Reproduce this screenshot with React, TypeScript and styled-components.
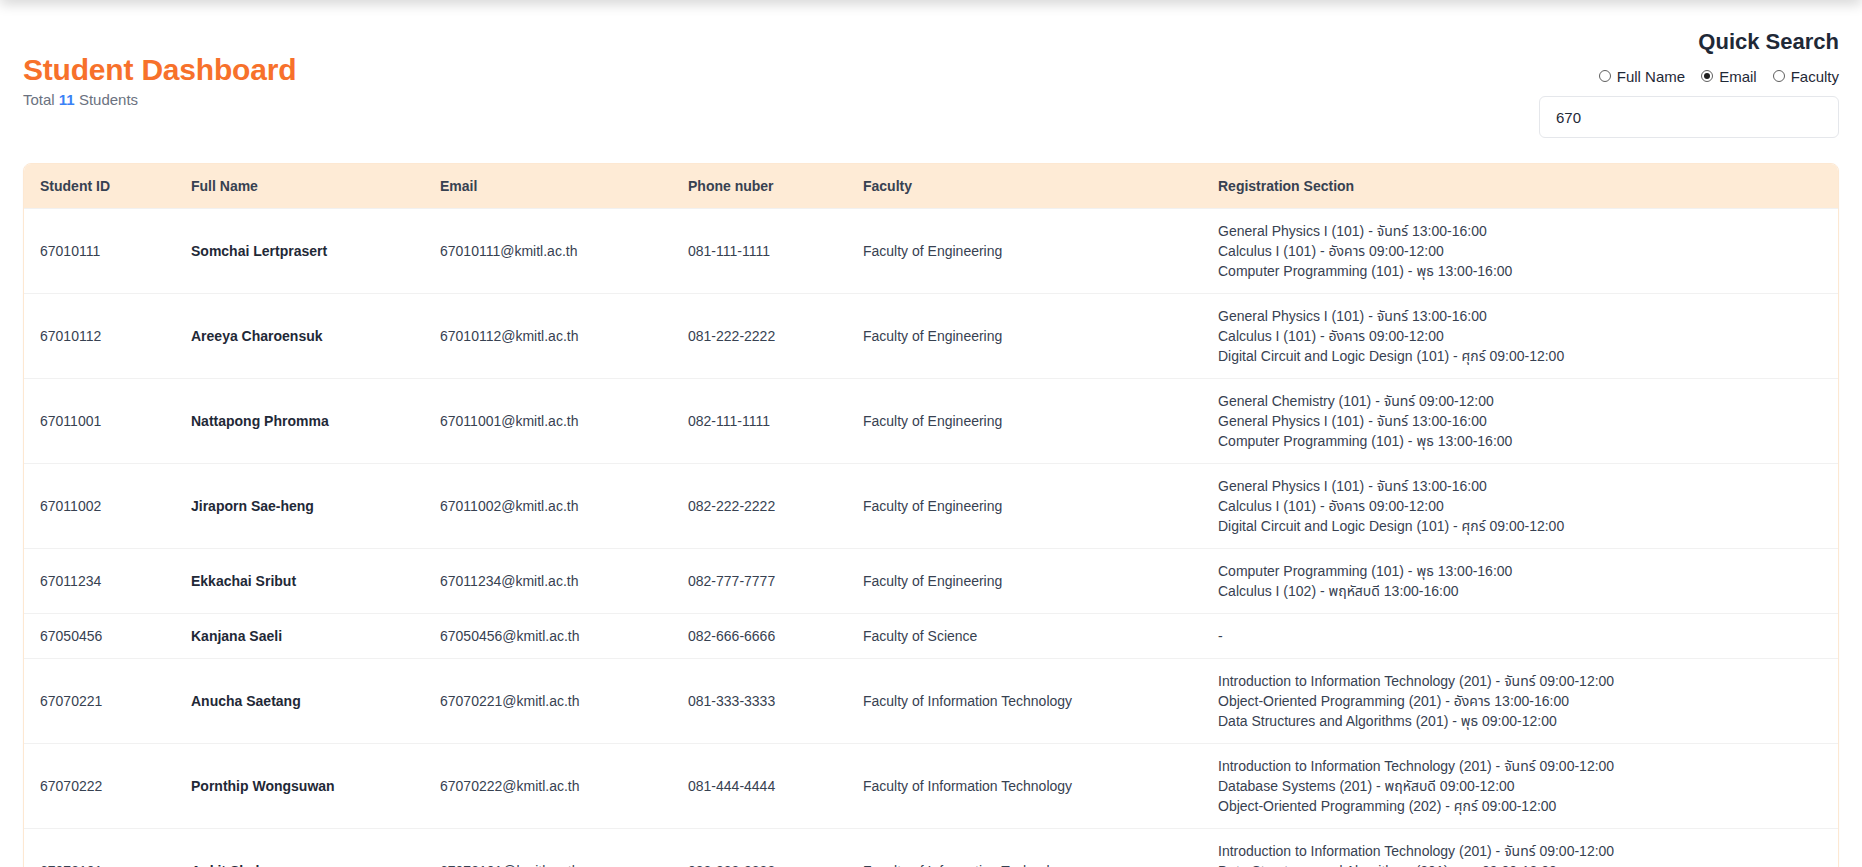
import React from "react";
import styled, { createGlobalStyle } from "styled-components";

const GlobalStyle = createGlobalStyle`
  html, body {
    margin: 0;
    padding: 0;
    background: #ffffff;
  }
  body {
    font-family: "Liberation Sans", "Noto Sans Thai", "Loma", "Garuda", "Noto Sans", sans-serif;
    color: #374151;
  }
  * { box-sizing: border-box; }
`;

const TopShade = styled.div`
  position: fixed;
  left: 0;
  right: 0;
  top: -12px;
  height: 12px;
  box-shadow: 0 3px 14px rgba(0, 0, 0, 0.2);
  z-index: 5;
`;

const Page = styled.main`
  padding: 26px 23px 24px;
`;

const Header = styled.header`
  display: flex;
  justify-content: space-between;
  align-items: flex-start;
  margin-bottom: 25px;
`;

const TitleBlock = styled.div`
  display: flex;
  flex-direction: column;
  margin-top: 26px;
`;

const Title = styled.h1`
  margin: 0;
  font-size: 30px;
  line-height: 36px;
  font-weight: 700;
  color: #f7712b;
  letter-spacing: -0.2px;
`;

const Subtitle = styled.p`
  margin: 2px 0 0;
  font-size: 15px;
  line-height: 20px;
  color: #6b7280;
`;

const Count = styled.span`
  color: #3b82f6;
  font-weight: 600;
`;

const SearchBlock = styled.div`
  display: flex;
  flex-direction: column;
  align-items: flex-end;
`;

const SearchTitle = styled.h2`
  margin: 0;
  font-size: 22px;
  line-height: 32px;
  font-weight: 700;
  color: #1f2937;
`;

const RadioRow = styled.div`
  display: flex;
  gap: 16px;
  margin-top: 8px;
  height: 20px;
  align-items: center;
`;

const RadioLabel = styled.label`
  display: flex;
  align-items: center;
  gap: 6px;
  font-size: 15px;
  color: #1f2937;
  cursor: pointer;
`;

const RadioDot = styled.input`
  appearance: none;
  margin: 0;
  width: 12px;
  height: 12px;
  border: 1px solid #5f5f5f;
  border-radius: 50%;
  display: grid;
  place-items: center;
  background: #fff;
  &:checked::after {
    content: "";
    width: 6px;
    height: 6px;
    border-radius: 50%;
    background: #1f1f1f;
  }
`;

const SearchInput = styled.input`
  margin-top: 10px;
  width: 300px;
  height: 42px;
  padding: 0 16px;
  border: 1px solid #e5e7eb;
  border-radius: 6px;
  font-family: inherit;
  font-size: 15px;
  color: #1f2937;
  outline: none;
`;

const Card = styled.section`
  border: 1px solid #fde8d2;
  border-radius: 8px;
  overflow: hidden;
  background: #fff;
  box-shadow: 0 1px 2px rgba(0, 0, 0, 0.04);
`;

const Table = styled.table`
  width: 100%;
  border-collapse: collapse;
  table-layout: fixed;
`;

const HeadRow = styled.tr`
  background: #feebd6;
`;

const Th = styled.th`
  text-align: left;
  padding: 12px 16px;
  font-size: 14px;
  line-height: 20px;
  font-weight: 700;
  color: #374151;
`;

const Row = styled.tr`
  border-top: 1px solid #f1f1f1;
`;

const Td = styled.td<{ $strong?: boolean }>`
  padding: 12px 16px;
  font-size: 14px;
  line-height: 20px;
  vertical-align: middle;
  color: ${(p) => (p.$strong ? "#1f2937" : "#374151")};
  font-weight: ${(p) => (p.$strong ? 600 : 400)};
  white-space: nowrap;
`;

const SectionLine = styled.div`
  white-space: nowrap;
`;

type Student = {
  id: string;
  name: string;
  phone: string;
  faculty: string;
  sections: string[];
};

const FOE = "Faculty of Engineering";
const FIT = "Faculty of Information Technology";

const students: Student[] = [
  {
    id: "67010111",
    name: "Somchai Lertprasert",
    phone: "081-111-1111",
    faculty: FOE,
    sections: [
      "General Physics I (101) - จันทร์ 13:00-16:00",
      "Calculus I (101) - อังคาร 09:00-12:00",
      "Computer Programming (101) - พุธ 13:00-16:00",
    ],
  },
  {
    id: "67010112",
    name: "Areeya Charoensuk",
    phone: "081-222-2222",
    faculty: FOE,
    sections: [
      "General Physics I (101) - จันทร์ 13:00-16:00",
      "Calculus I (101) - อังคาร 09:00-12:00",
      "Digital Circuit and Logic Design (101) - ศุกร์ 09:00-12:00",
    ],
  },
  {
    id: "67011001",
    name: "Nattapong Phromma",
    phone: "082-111-1111",
    faculty: FOE,
    sections: [
      "General Chemistry (101) - จันทร์ 09:00-12:00",
      "General Physics I (101) - จันทร์ 13:00-16:00",
      "Computer Programming (101) - พุธ 13:00-16:00",
    ],
  },
  {
    id: "67011002",
    name: "Jiraporn Sae-heng",
    phone: "082-222-2222",
    faculty: FOE,
    sections: [
      "General Physics I (101) - จันทร์ 13:00-16:00",
      "Calculus I (101) - อังคาร 09:00-12:00",
      "Digital Circuit and Logic Design (101) - ศุกร์ 09:00-12:00",
    ],
  },
  {
    id: "67011234",
    name: "Ekkachai Sribut",
    phone: "082-777-7777",
    faculty: FOE,
    sections: [
      "Computer Programming (101) - พุธ 13:00-16:00",
      "Calculus I (102) - พฤหัสบดี 13:00-16:00",
    ],
  },
  {
    id: "67050456",
    name: "Kanjana Saeli",
    phone: "082-666-6666",
    faculty: "Faculty of Science",
    sections: [],
  },
  {
    id: "67070221",
    name: "Anucha Saetang",
    phone: "081-333-3333",
    faculty: FIT,
    sections: [
      "Introduction to Information Technology (201) - จันทร์ 09:00-12:00",
      "Object-Oriented Programming (201) - อังคาร 13:00-16:00",
      "Data Structures and Algorithms (201) - พุธ 09:00-12:00",
    ],
  },
  {
    id: "67070222",
    name: "Pornthip Wongsuwan",
    phone: "081-444-4444",
    faculty: FIT,
    sections: [
      "Introduction to Information Technology (201) - จันทร์ 09:00-12:00",
      "Database Systems (201) - พฤหัสบดี 09:00-12:00",
      "Object-Oriented Programming (202) - ศุกร์ 09:00-12:00",
    ],
  },
  {
    id: "67073101",
    name: "Ankit Shah",
    phone: "082-333-3333",
    faculty: FIT,
    sections: [
      "Introduction to Information Technology (201) - จันทร์ 09:00-12:00",
      "Data Structures and Algorithms (201) - พุธ 09:00-12:00",
      "Database Systems (201) - พฤหัสบดี 09:00-12:00",
    ],
  },
  {
    id: "67080111",
    name: "Suda Meesuk",
    phone: "083-111-1111",
    faculty: "Faculty of Science",
    sections: ["General Chemistry (101) - จันทร์ 09:00-12:00"],
  },
  {
    id: "67080112",
    name: "Wichai Thongdee",
    phone: "083-222-2222",
    faculty: "Faculty of Science",
    sections: ["Calculus I (102) - พฤหัสบดี 13:00-16:00"],
  },
];

const columns = ["Student ID", "Full Name", "Email", "Phone nuber", "Faculty", "Registration Section"];
const widths = [151, 249, 248, 175, 355, undefined];

export default function App() {
  return (
    <>
      <GlobalStyle />
      <TopShade />
      <Page>
        <Header>
          <TitleBlock>
            <Title>Student Dashboard</Title>
            <Subtitle>
              Total <Count>11</Count> Students
            </Subtitle>
          </TitleBlock>
          <SearchBlock>
            <SearchTitle>Quick Search</SearchTitle>
            <RadioRow>
              <RadioLabel>
                <RadioDot type="radio" name="mode" />
                Full Name
              </RadioLabel>
              <RadioLabel>
                <RadioDot type="radio" name="mode" defaultChecked />
                Email
              </RadioLabel>
              <RadioLabel>
                <RadioDot type="radio" name="mode" />
                Faculty
              </RadioLabel>
            </RadioRow>
            <SearchInput defaultValue="670" />
          </SearchBlock>
        </Header>
        <Card>
          <Table>
            <colgroup>
              {widths.map((w, i) => (
                <col key={i} style={w ? { width: w } : undefined} />
              ))}
            </colgroup>
            <thead>
              <HeadRow>
                {columns.map((c) => (
                  <Th key={c}>{c}</Th>
                ))}
              </HeadRow>
            </thead>
            <tbody>
              {students.map((s) => (
                <Row key={s.id}>
                  <Td>{s.id}</Td>
                  <Td $strong>{s.name}</Td>
                  <Td>{s.id}@kmitl.ac.th</Td>
                  <Td>{s.phone}</Td>
                  <Td>{s.faculty}</Td>
                  <Td>
                    {s.sections.length === 0
                      ? "-"
                      : s.sections.map((line) => <SectionLine key={line}>{line}</SectionLine>)}
                  </Td>
                </Row>
              ))}
            </tbody>
          </Table>
        </Card>
      </Page>
    </>
  );
}
